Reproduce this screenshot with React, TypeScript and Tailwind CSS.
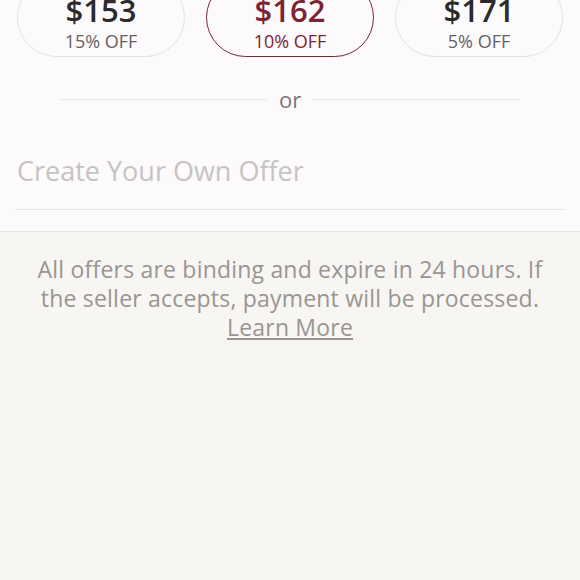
import React, { useState } from 'react';

const offers = [
  { price: '$153', off: '15% OFF' },
  { price: '$162', off: '10% OFF' },
  { price: '$171', off: '5% OFF' },
];

export default function App() {
  const [selected, setSelected] = useState(1);
  const [custom, setCustom] = useState('');

  return (
    <div className="min-h-[580px] bg-[#f7f6f2] font-['Open_Sans',sans-serif]">
      <div className="overflow-hidden bg-[#fcfafb] border-b border-[#e9e7e6]">
        {/* preset offers */}
        <div className="-mt-[22px] grid grid-cols-3 gap-[21px] px-[17px]">
          {offers.map((o, i) => {
            const active = i === selected;
            return (
              <button
                key={o.price}
                onClick={() => setSelected(i)}
                className={
                  active
                    ? 'flex h-[79px] flex-col items-center justify-center rounded-full border border-[#7c2334] pt-[8px] text-[#7c2334]'
                    : 'flex h-[79px] flex-col items-center justify-center rounded-full border border-[#e3e0e1] pt-[8px]'
                }
              >
                <span className={active ? 'text-[31px] leading-[34px] font-semibold' : 'text-[31px] leading-[34px] font-semibold text-[#2b2b2b]'}>
                  {o.price}
                </span>
                <span className={active ? 'mt-[4px] text-[18px] leading-[20px]' : 'mt-[4px] text-[18px] leading-[20px] text-[#656263]'}>
                  {o.off}
                </span>
              </button>
            );
          })}
        </div>

        {/* or divider */}
        <div className="mt-[30px] flex items-center gap-3 px-[60px]">
          <div className="h-px flex-1 bg-[#e9e6e8]" />
          <span className="text-[22px] leading-6 text-[#7a7778]">or</span>
          <div className="h-px flex-1 bg-[#e9e6e8]" />
        </div>

        {/* custom offer */}
        <div className="mx-[15px] mt-[44px] mb-[21px] border-b border-[#e8e5e6] pb-[22px]">
          <input
            value={custom}
            onChange={(e) => setCustom(e.target.value)}
            placeholder="Create Your Own Offer"
            className="w-full bg-transparent px-[2px] text-[27px] leading-[32px] text-[#2b2b2b] outline-none placeholder:text-[#c6c3c4]"
          />
        </div>
      </div>

      <p className="px-[20px] pt-[23px] text-center text-[23px] leading-[29px] tracking-[0.2px] text-[#9a9593]">
        All offers are binding and expire in 24 hours. If
        <br />
        the seller accepts, payment will be processed.
        <br />
        <a href="#" className="underline underline-offset-2">Learn More</a>
      </p>
    </div>
  );
}
